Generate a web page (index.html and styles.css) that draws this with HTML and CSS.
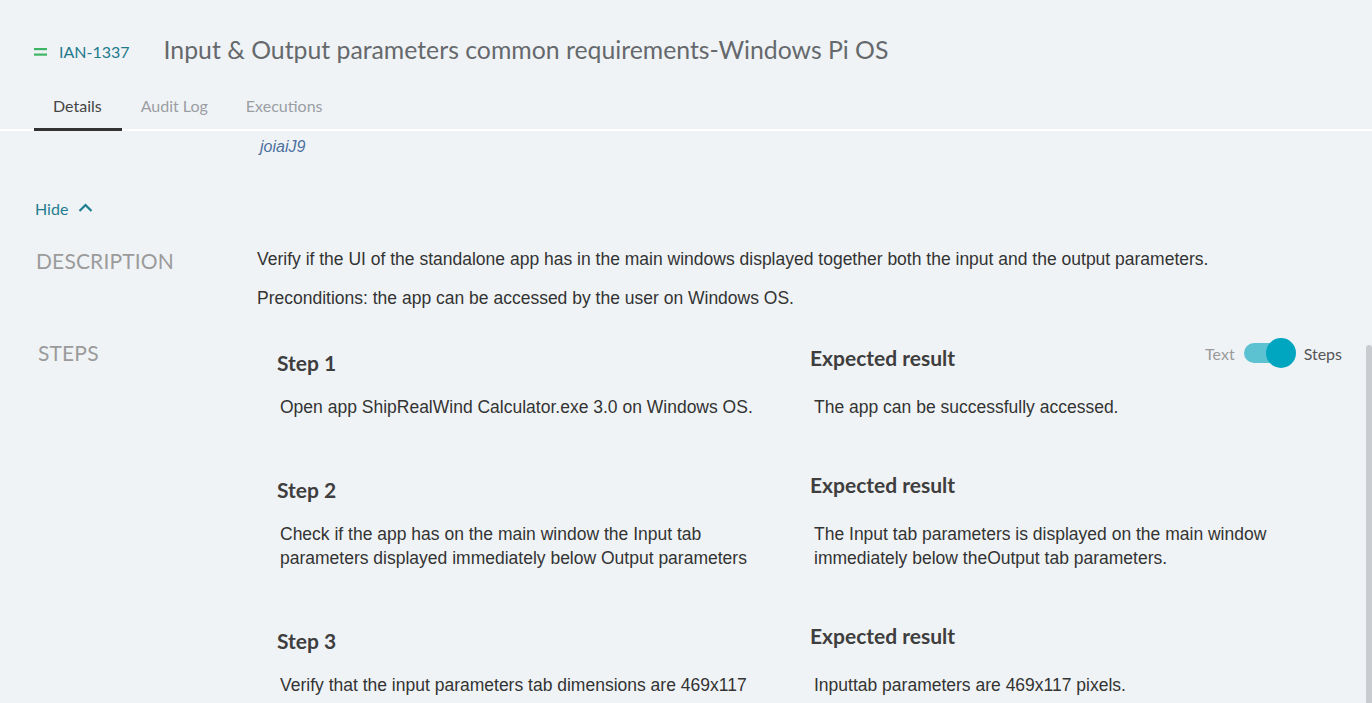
FILE: index.html
```html
<!DOCTYPE html>
<html>
<head>
<meta charset="utf-8">
<link rel="stylesheet" href="styles.css">
</head>
<body>
<div class="page">
  <header class="header">
    <div class="title-row">
      <svg class="type-icon" width="13" height="10" viewBox="0 0 13 10"><rect x="0" y="1" width="13" height="2.2" fill="#3db564"/><rect x="0" y="6.5" width="13" height="2.2" fill="#3db564"/></svg>
      <span class="issue-key">IAN-1337</span>
      <h1 class="title">Input &amp; Output parameters common requirements-Windows Pi OS</h1>
    </div>
    <nav class="tabs">
      <span class="tab active">Details</span>
      <span class="tab">Audit Log</span>
      <span class="tab">Executions</span>
    </nav>
  </header>
  <main class="content">
    <div class="origin">
      <div class="origin-inner">Imported from legacy app by qa_sync, copy reference key: https://tracker.example.com/ref/copy/<br>joiaiJ9</div>
    </div>
    <div class="hide-link">Hide <svg width="15" height="10" viewBox="0 0 15 10"><path d="M1.5 8 L7.5 2 L13.5 8" fill="none" stroke="#1f7d91" stroke-width="2.2"/></svg></div>
    <section class="row desc-row">
      <div class="label">DESCRIPTION</div>
      <div class="value">
        <p class="para">Verify if the UI of the standalone app has in the main windows displayed together both the input and the output parameters.</p>
        <p class="para">Preconditions: the app can be accessed by the user on Windows OS.</p>
      </div>
    </section>
    <section class="row steps-row">
      <div class="label steps-label">STEPS</div>
      <div class="steps">
        <div class="toggle">
          <span class="toggle-off">Text</span>
          <span class="switch"><span class="knob"></span></span>
          <span class="toggle-on">Steps</span>
        </div>
        <div class="step">
          <div class="cell">
            <h3 class="step-title">Step 1</h3>
            <p class="step-text">Open app ShipRealWind Calculator.exe 3.0 on Windows OS.</p>
          </div>
          <div class="cell">
            <h3 class="exp-title">Expected result</h3>
            <p class="step-text">The app can be successfully accessed.</p>
          </div>
        </div>
        <div class="step">
          <div class="cell">
            <h3 class="step-title">Step 2</h3>
            <p class="step-text">Check if the app has on the main window the Input tab parameters displayed immediately below Output parameters</p>
          </div>
          <div class="cell">
            <h3 class="exp-title">Expected result</h3>
            <p class="step-text">The Input tab parameters is displayed on the main window immediately below theOutput tab parameters.</p>
          </div>
        </div>
        <div class="step">
          <div class="cell">
            <h3 class="step-title">Step 3</h3>
            <p class="step-text">Verify that the input parameters tab dimensions are 469x117</p>
          </div>
          <div class="cell">
            <h3 class="exp-title">Expected result</h3>
            <p class="step-text">Inputtab parameters are 469x117 pixels.</p>
          </div>
        </div>
      </div>
    </section>
  </main>
  <div class="scroll-thumb"></div>
</div>
</body>
</html>
```

FILE: styles.css
```css
html, body {
  margin: 0;
  padding: 0;
  height: 100%;
  overflow: hidden;
}
body {
  background: #f0f3f6;
  font-family: "Liberation Sans", Arial, sans-serif;
  color: #333;
}
.page {
  position: relative;
  height: 703px;
  overflow: hidden;
}
.header {
  padding: 27px 0 0 34px;
  border-bottom: 2px solid #ffffff;
  font-family: Lato, "Open Sans", sans-serif;
}
.title-row {
  display: flex;
  align-items: center;
  height: 44px;
}
.type-icon {
  margin-top: 5px;
}
.issue-key {
  margin-left: 12px;
  font-size: 16px;
  color: #227a8d;
  margin-top: 5px;
}
.title {
  margin: 0 0 0 34px;
  font-size: 24.8px;
  font-weight: 400;
  color: #65696c;
}
.tabs {
  display: flex;
  margin-top: 16px;
  margin-bottom: -2px;
}
.tab {
  padding: 0 19px;
  height: 44px;
  line-height: 38px;
  font-size: 16px;
  color: #9a9ea3;
  box-sizing: border-box;
  border-bottom: 3px solid transparent;
}
.tab:first-child {
  padding-right: 20px;
}
.tab.active {
  color: #444;
  border-bottom-color: #333;
}
.content {
  padding: 0 30px 0 36px;
}
.origin {
  overflow: hidden;
  height: 28px;
  padding-left: 224px;
}
.origin-inner {
  margin-top: -20px;
  font-style: italic;
  font-size: 16px;
  line-height: 24px;
  color: #4b6f9e;
}
.hide-link {
  display: flex;
  align-items: center;
  gap: 10px;
  margin-top: 37px;
  margin-left: -1px;
  height: 24px;
  font-family: Lato, "Open Sans", sans-serif;
  font-size: 16px;
  color: #1f7d91;
}
.row {
  display: flex;
}
.label {
  width: 221px;
  flex: none;
  font-family: Lato, "Open Sans", sans-serif;
  font-size: 21px;
  line-height: 24px;
  color: #9b9b9b;
  letter-spacing: 0.15px;
}
.desc-row {
  margin-top: 27px;
}
.desc-row .label {
  margin-top: 2px;
}
.value {
  flex: 1;
}
.para {
  margin: 0 0 15px 0;
  font-size: 17.5px;
  line-height: 24px;
  color: #333;
}
.steps-row {
  margin-top: 16px;
}
.steps-label {
  padding-left: 2px;
  width: 219px;
}
.steps {
  position: relative;
  flex: 1;
  padding: 5px 0 0 20px;
}
.toggle {
  position: absolute;
  top: -1px;
  right: 0;
  display: flex;
  align-items: center;
  font-family: Lato, "Open Sans", sans-serif;
  font-size: 16px;
  height: 26px;
}
.toggle-off {
  color: #9a9a9a;
}
.toggle-on {
  color: #555;
}
.switch {
  position: relative;
  width: 46px;
  height: 20px;
  border-radius: 10px;
  background: #5cc2d2;
  margin: 0 14px 0 9px;
}
.knob {
  position: absolute;
  right: -6px;
  top: -5px;
  width: 30px;
  height: 30px;
  border-radius: 50%;
  background: #00a5c0;
}
.step {
  display: grid;
  grid-template-columns: 533px 1fr;
  margin-bottom: 54px;
}
.cell {
  display: flex;
  flex-direction: column;
}
.step-title, .exp-title {
  margin: 0;
  font-family: Lato, "Open Sans", sans-serif;
  font-weight: 700;
  font-size: 21px;
  line-height: 24px;
  color: #3e3e3e;
}
.step-title {
  margin-top: 5px;
  margin-bottom: 20px;
}
.exp-title {
  margin-bottom: 25px;
}
.step-text {
  margin: 0;
  padding: 0 40px 0 3px;
  font-size: 17.5px;
  line-height: 24px;
  color: #333;
}
.exp-title + .step-text {
  padding-left: 4px;
}
.scroll-thumb {
  position: absolute;
  right: 0;
  top: 345px;
  bottom: 0;
  width: 6px;
  background: #c8cbcf;
  border-radius: 3px 3px 0 0;
}
```
